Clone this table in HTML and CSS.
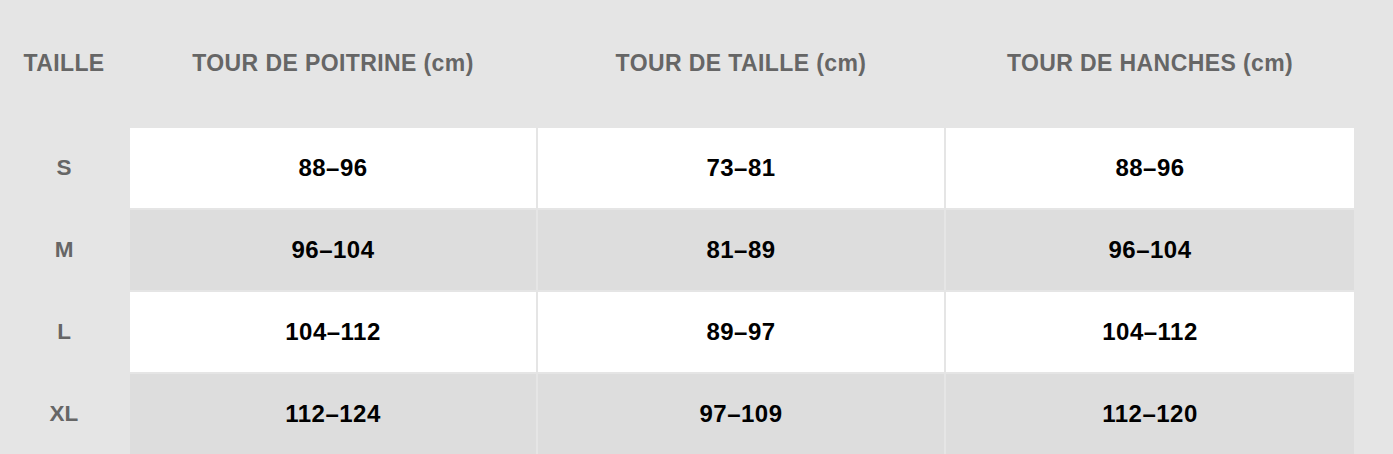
FILE: index.html
```html
<!DOCTYPE html>
<html lang="fr">
<head>
<meta charset="utf-8">
<title>Guide des tailles</title>
<link rel="stylesheet" href="styles.css">
</head>
<body>
<div class="chart">
  <div class="head">TAILLE</div>
  <div class="head">TOUR DE POITRINE (cm)</div>
  <div class="head">TOUR DE TAILLE (cm)</div>
  <div class="head">TOUR DE HANCHES (cm)</div>

  <div class="size">S</div>
  <div class="cell light">88–96</div>
  <div class="cell light">73–81</div>
  <div class="cell light">88–96</div>

  <div class="size">M</div>
  <div class="cell dark">96–104</div>
  <div class="cell dark">81–89</div>
  <div class="cell dark">96–104</div>

  <div class="size">L</div>
  <div class="cell light">104–112</div>
  <div class="cell light">89–97</div>
  <div class="cell light">104–112</div>

  <div class="size">XL</div>
  <div class="cell dark">112–124</div>
  <div class="cell dark">97–109</div>
  <div class="cell dark">112–120</div>
</div>
</body>
</html>
```
FILE: styles.css
```css
html, body {
  margin: 0;
  padding: 0;
  background: #e5e5e5;
}
body {
  font-family: "Liberation Sans", Arial, Helvetica, sans-serif;
  font-weight: bold;
}
.chart {
  display: grid;
  grid-template-columns: 128px 406px 406px 408px;
  grid-template-rows: 126px repeat(4, 80px);
  gap: 2px;
}
.head {
  display: flex;
  align-items: center;
  justify-content: center;
  color: #666666;
  font-size: 23px;
  letter-spacing: 0.4px;
}
.size {
  display: flex;
  align-items: center;
  justify-content: center;
  color: #666666;
  font-size: 22.5px;
}
.cell {
  display: flex;
  align-items: center;
  justify-content: center;
  color: #000;
  font-size: 24px;
  letter-spacing: 0.5px;
}
.light { background: #ffffff; }
.dark { background: #dddddd; }
```
